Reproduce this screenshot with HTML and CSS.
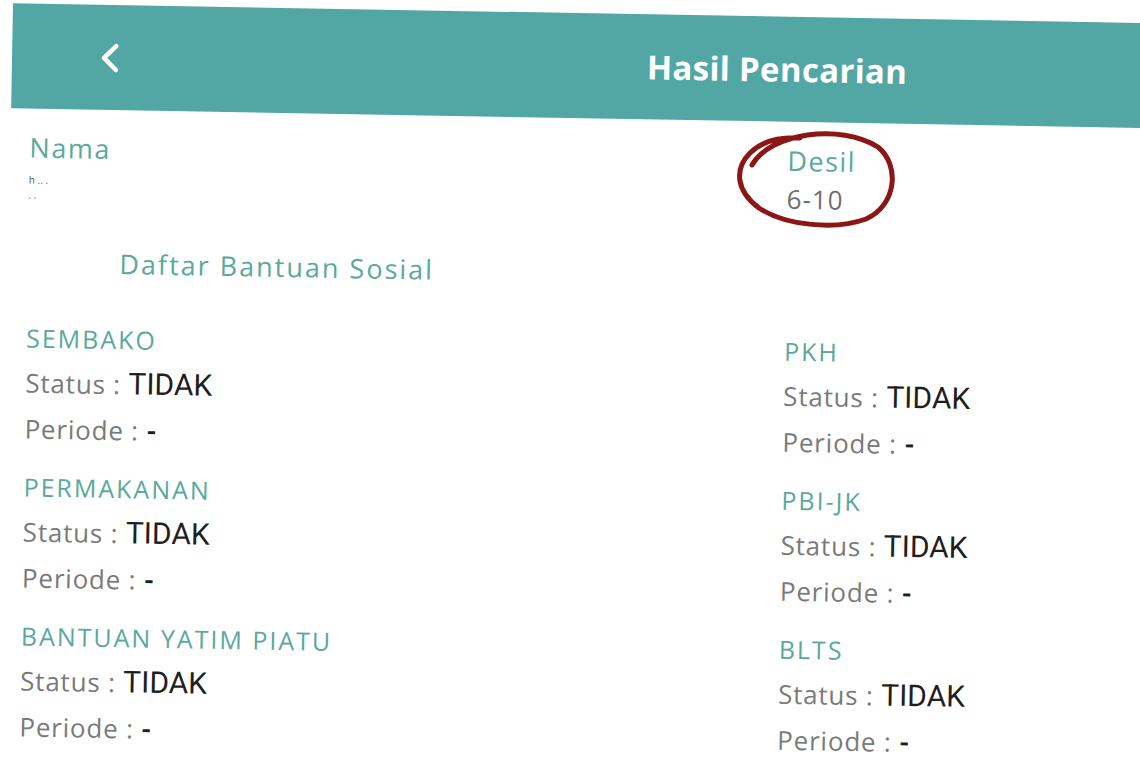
FILE: index.html
```html
<!DOCTYPE html>
<html lang="id">
<head>
    <meta charset="UTF-8">
    <meta name="viewport" content="width=device-width, initial-scale=1.0">
    <title>Hasil Pencarian</title>
    <link rel="stylesheet" href="styles.css">
</head>
<body>
    <div class="screen">
        <header class="appbar">
            <button class="back" aria-label="Kembali">
                <svg width="22" height="30" viewBox="0 0 22 30">
                    <path d="M17 3 L5 15 L17 27" fill="none" stroke="#fff" stroke-width="4.5" stroke-linecap="round" stroke-linejoin="round"/>
                </svg>
            </button>
            <h1 class="title">Hasil Pencarian</h1>
        </header>

        <div class="info">
            <div class="info-item">
                <div class="label">Nama</div>
                <div class="name-value">h .. .<br>. .</div>
            </div>
            <div class="info-item">
                <div class="label">Desil</div>
                <div class="value">6-10</div>
            </div>
        </div>

        <h2 class="subtitle">Daftar Bantuan Sosial</h2>

        <div class="programs">
            <div class="col">
                <div class="program">
                    <div class="prog-name">SEMBAKO</div>
                    <div class="row">Status : <span class="val">TIDAK</span></div>
                    <div class="row">Periode : <span class="dash">-</span></div>
                </div>
                <div class="program">
                    <div class="prog-name">PERMAKANAN</div>
                    <div class="row">Status : <span class="val">TIDAK</span></div>
                    <div class="row">Periode : <span class="dash">-</span></div>
                </div>
                <div class="program">
                    <div class="prog-name">BANTUAN YATIM PIATU</div>
                    <div class="row">Status : <span class="val">TIDAK</span></div>
                    <div class="row">Periode : <span class="dash">-</span></div>
                </div>
            </div>
            <div class="col">
                <div class="program">
                    <div class="prog-name">PKH</div>
                    <div class="row">Status : <span class="val">TIDAK</span></div>
                    <div class="row">Periode : <span class="dash">-</span></div>
                </div>
                <div class="program">
                    <div class="prog-name">PBI-JK</div>
                    <div class="row">Status : <span class="val">TIDAK</span></div>
                    <div class="row">Periode : <span class="dash">-</span></div>
                </div>
                <div class="program">
                    <div class="prog-name">BLTS</div>
                    <div class="row">Status : <span class="val">TIDAK</span></div>
                    <div class="row">Periode : <span class="dash">-</span></div>
                </div>
            </div>
        </div>
    </div>

    <!-- coretan tangan di atas foto -->
    <svg class="mark" width="175" height="110" viewBox="0 0 175 110">
        <path d="M22 40 C40 8 110 -2 148 22 C170 40 167 80 136 94 C106 105 56 101 29 83 C6 66 4 44 20 28 C32 16 50 12 70 13"
              fill="none" stroke="#8c1616" stroke-width="5" stroke-linecap="round"/>
    </svg>
</body>
</html>
```

FILE: styles.css
```css
html, body {
    margin: 0;
    height: 100%;
    overflow: hidden;
    background: #fff;
}

body {
    position: relative;
    font-family: 'Open Sans', 'DejaVu Sans', sans-serif;
}

.screen {
    width: 1160px;
    transform: rotate(1deg);
    transform-origin: 0 0;
}

.appbar {
    display: flex;
    align-items: center;
    height: 105px;
    margin: 3px 0 0 13px;
    background: #52a7a5;
}

.back {
    display: flex;
    margin-left: 87px;
    padding: 0;
    border: none;
    background: none;
}

.title {
    margin: 0 0 0 526px;
    color: #fff;
    font-size: 33px;
    font-weight: 700;
    letter-spacing: 0.3px;
}

.info {
    display: grid;
    grid-template-columns: 758px 1fr;
    padding-left: 32px;
    margin-top: 20px;
}

.label {
    color: #5aa99b;
    font-size: 27px;
    line-height: 38px;
    letter-spacing: 1.5px;
}

.value {
    color: #6f6f6f;
    font-size: 26px;
    line-height: 38px;
    letter-spacing: 1px;
}

.name-value {
    height: 38px;
    padding-top: 6px;
    box-sizing: border-box;
    color: #555;
    font-size: 10px;
    line-height: 15px;
}

.subtitle {
    margin: 38px 0 0 124px;
    color: #5aa99b;
    font-size: 27px;
    font-weight: 400;
    line-height: 40px;
    letter-spacing: 2px;
}

.programs {
    display: grid;
    grid-template-columns: 758px 1fr;
    padding-left: 32px;
    margin-top: 33px;
}

.program {
    margin-bottom: 13px;
}

.prog-name {
    color: #5aa99b;
    font-size: 25px;
    line-height: 44px;
    letter-spacing: 2px;
}

.row {
    color: #7a7a7a;
    font-size: 26px;
    line-height: 46px;
    letter-spacing: 0.8px;
}

.val {
    color: #1f1f1f;
    font-family: Roboto, 'Liberation Sans', sans-serif;
    font-size: 30px;
    line-height: 1;
    letter-spacing: 0;
}

.dash {
    color: #1f1f1f;
    font-family: Roboto, 'Liberation Sans', sans-serif;
    font-weight: 700;
    line-height: 1;
}

.mark {
    position: absolute;
    left: 730px;
    top: 125px;
}
```
